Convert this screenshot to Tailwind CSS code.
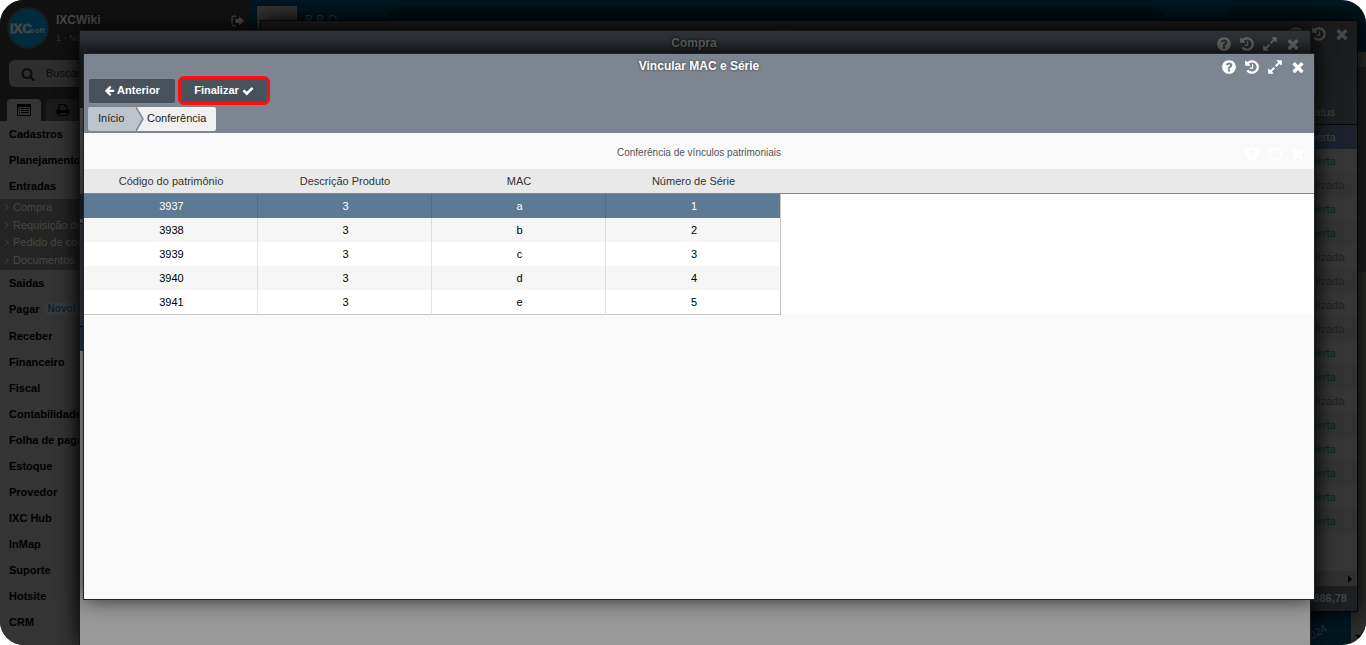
<!DOCTYPE html>
<html lang="pt-BR">
<head>
<meta charset="utf-8">
<title>Vincular MAC e Série</title>
<script src="https://cdn.jsdelivr.net/npm/@tailwindcss/browser@4"></script>
</head>
<body class="bg-white font-['Liberation_Sans',Arial,sans-serif] text-[11px]">

<svg class="hidden" aria-hidden="true">
  <symbol id="help" viewBox="0 0 1792 1792"><path d="M1024 1376v-192q0-14-9-23t-23-9h-192q-14 0-23 9t-9 23v192q0 14 9 23t23 9h192q14 0 23-9t9-23zm256-672q0-88-55.5-163t-138.5-116-170-41q-243 0-371 213-15 24 8 42l132 100q7 6 19 6 16 0 25-12 53-68 86-92 34-24 86-24 48 0 85.5 26t37.5 59q0 38-20 61t-68 45q-63 28-115.5 86.5t-52.5 125.5v36q0 14 9 23t23 9h192q14 0 23-9t9-23q0-19 21.5-49.5t54.5-49.5q32-18 49-28.5t46-35 44.5-48 28-60.5 12.5-81zm384 192q0 209-103 385.5t-279.5 279.5-385.5 103-385.5-103-279.5-279.5-103-385.5 103-385.5 279.5-279.5 385.5-103 385.5 103 279.5 279.5 103 385.5z"/></symbol>
  <symbol id="history" viewBox="0 0 1792 1792"><path d="M1664 896q0 156-61 298t-164 245-245 164-298 61q-172 0-327-72.5t-264-204.5q-7-10-6.5-22.5t8.5-20.5l137-138q10-9 25-9 16 2 23 12 73 95 179 147t225 52q104 0 198.5-40.5t163.5-109.5 109.5-163.5 40.5-198.5-40.5-198.5-109.5-163.5-163.5-109.5-198.5-40.5q-98 0-188 35.5t-160 101.5l137 138q31 30 14 69-17 40-59 40h-448q-26 0-45-19t-19-45v-448q0-42 40-59 39-17 69 14l130 129q107-101 244.5-156.5t284.5-55.5q156 0 298 61t245 164 164 245 61 298zm-640-288v448q0 14-9 23t-23 9h-320q-14 0-23-9t-9-23v-64q0-14 9-23t23-9h224v-352q0-14 9-23t23-9h64q14 0 23 9t9 23z"/></symbol>
  <symbol id="expand" viewBox="0 0 1792 1792"><path d="M883 1056q0 13-10 23l-332 332 144 144q19 19 19 45t-19 45-45 19h-448q-26 0-45-19t-19-45v-448q0-26 19-45t45-19 45 19l144 144 332-332q10-10 23-10t23 10l114 114q10 10 10 23zm781-864v448q0 26-19 45t-45 19-45-19l-144-144-332 332q-10 10-23 10t-23-10l-114-114q-10-10-10-23t10-23l332-332-144-144q-19-19-19-45t19-45 45-19h448q26 0 45 19t19 45z"/></symbol>
  <symbol id="close" viewBox="0 0 1792 1792"><path d="M1490 1322q0 40-28 68l-136 136q-28 28-68 28t-68-28l-294-294-294 294q-28 28-68 28t-68-28l-136-136q-28-28-28-68t28-68l294-294-294-294q-28-28-28-68t28-68l136-136q28-28 68-28t68 28l294 294 294-294q28-28 68-28t68 28l136 136q28 28 28 68t-28 68l-294 294 294 294q28 28 28 68z"/></symbol>
  <symbol id="check" viewBox="0 0 1792 1792"><path d="M1671 566q0 40-28 68l-724 724-136 136q-28 28-68 28t-68-28l-136-136-362-362q-28-28-28-68t28-68l136-136q28-28 68-28t68 28l294 295 656-657q28-28 68-28t68 28l136 136q28 28 28 68z"/></symbol>
  <symbol id="arrow" viewBox="0 0 1792 1792"><path d="M1664 896v128q0 53-32.5 90.5t-84.5 37.5h-704l293 294q38 36 38 90t-38 90l-75 76q-37 37-90 37-52 0-91-37l-651-652q-37-37-37-90 0-52 37-91l651-650q38-38 91-38 52 0 90 38l75 74q38 38 38 91t-38 91l-293 293h704q52 0 84.5 37.5t32.5 90.5z"/></symbol>
  <symbol id="search" viewBox="0 0 1792 1792"><path d="M1216 832q0-185-131.5-316.5t-316.5-131.5-316.5 131.5-131.5 316.5 131.5 316.5 316.5 131.5 316.5-131.5 131.5-316.5zm512 832q0 52-38 90t-90 38q-54 0-90-38l-343-342q-179 124-399 124-143 0-273.5-55.5t-225-150-150-225-55.5-273.5 55.5-273.5 150-225 225-150 273.5-55.5 273.5 55.5 225 150 150 225 55.5 273.5q0 220-124 399l343 343q37 37 37 90z"/></symbol>
  <symbol id="print" viewBox="0 0 1792 1792"><path d="M448 1536h896v-256h-896v256zm0-640h896v-384h-160q-40 0-68-28t-28-68v-160h-640v640zm1152 64q0-26-19-45t-45-19-45 19-19 45 19 45 45 19 45-19 19-45zm128 0v416q0 13-9.5 22.5t-22.5 9.5h-224v160q0 40-28 68t-68 28h-960q-40 0-68-28t-28-68v-160h-224q-13 0-22.5-9.5t-9.5-22.5v-416q0-79 56.5-135.5t135.5-56.5h64v-544q0-40 28-68t68-28h672q40 0 88 20t76 48l152 152q28 28 48 76t20 88v256h64q79 0 135.5 56.5t56.5 135.5z"/></symbol>
  <symbol id="list" viewBox="0 0 14 12"><path fill-rule="evenodd" d="M1.2 0h11.6Q14 0 14 1.2v9.6q0 1.200-1.200 1.200H1.200Q0 12 0 10.800V1.200Q0 0 1.200 0zM1 3v7.800q0 .2.2.2h11.600q.2 0 .2-.2V3zM2 4h1v1H2zM4 4h8v1H4zM2 6h1v1H2zM4 6h8v1H4zM2 8h1v1H2zM4 8h8v1H4z"/></symbol>
  <symbol id="exit" viewBox="0 0 14 12"><path fill="none" stroke="currentColor" stroke-width="1.200" d="M5 1.200H2.800Q1 1.200 1 3v6q0 1.800 1.800 1.800H5"/><path d="M4.500 4h3.500V1.200L13 6 8 10.800V8H4.500z"/></symbol>
</svg>

<div class="relative flex h-screen overflow-hidden rounded-3xl bg-[#001722]">

  <!-- Sidebar -->
  <aside class="flex w-[250px] shrink-0 flex-col bg-[#343434] text-black">
    <div class="bg-[#111111] px-[9px] pt-[7px]">
      <div class="flex h-[53px] items-start">
        <svg class="-ml-0.5 size-[42px] shrink-0" viewBox="0 0 42 42" role="img" aria-label="IXCsoft">
          <circle cx="21" cy="21" r="20" fill="#002b3d" stroke="#191d1f" stroke-width="1.500"/>
          <text x="3" y="26" fill="#444" stroke="#444" stroke-width=".8" font-family="Liberation Sans" font-weight="700" font-size="13">IXC</text>
          <text x="23" y="26" fill="#444" font-family="Liberation Sans" font-weight="700" font-size="8">soft</text>
        </svg>
        <div class="ml-[7px] flex-1 pt-[5px] text-[#484848]">
          <p class="text-xs leading-4 font-bold">IXCWiki</p>
          <p class="mt-1 text-[9px] leading-3 text-[#303030]">1 - Novo</p>
        </div>
        <button class="mt-2 -mr-1 text-[#484848]" aria-label="Sair"><svg class="h-3 w-[14px] fill-current"><use href="#exit"/></svg></button>
      </div>
      <label class="flex h-[27px] items-center gap-[11px] rounded-md bg-[#2e2e2e] px-3 text-[#0b0b0b]">
        <svg class="size-[14px] fill-current"><use href="#search"/></svg>
        <input class="min-w-0 flex-1 placeholder:text-[#0b0b0b]" placeholder="Buscar" aria-label="Buscar">
      </label>
      <div class="mt-3 -ml-0.5 flex gap-[5px]">
        <button class="flex h-[22px] w-[34px] items-center justify-center rounded-t bg-[#343434]" aria-label="Menu"><svg class="h-3 w-[14px] fill-current"><use href="#list"/></svg></button>
        <button class="flex h-[22px] w-[34px] items-center justify-center rounded-t bg-[#1b1b1b]" aria-label="Imprimir"><svg class="size-[14px] fill-current"><use href="#print"/></svg></button>
      </div>
    </div>
    <nav class="font-bold leading-[26px]">
      <a href="#" class="block pl-[9px]">Cadastros</a>
      <a href="#" class="block pl-[9px]">Planejamento</a>
      <a href="#" class="block pl-[9px]">Entradas</a>
      <div class="flex h-[71px] flex-col justify-between bg-[#242424] pb-px font-normal leading-[17px] text-[#474747]">
        <a href="#" class="flex items-center gap-1 pl-1"><svg class="h-[7px] w-[5px] fill-none stroke-current" viewBox="0 0 5 7"><path d="M1 .5l3 3-3 3"/></svg>Compra</a>
        <a href="#" class="flex items-center gap-1 pl-1"><svg class="h-[7px] w-[5px] fill-none stroke-current" viewBox="0 0 5 7"><path d="M1 .5l3 3-3 3"/></svg>Requisição de</a>
        <a href="#" class="flex items-center gap-1 pl-1"><svg class="h-[7px] w-[5px] fill-none stroke-current" viewBox="0 0 5 7"><path d="M1 .5l3 3-3 3"/></svg>Pedido de compra</a>
        <a href="#" class="flex items-center gap-1 pl-1"><svg class="h-[7px] w-[5px] fill-none stroke-current" viewBox="0 0 5 7"><path d="M1 .5l3 3-3 3"/></svg>Documentos</a>
      </div>
      <a href="#" class="block pl-[9px]">Saidas</a>
      <a href="#" class="mb-px flex items-center pl-[9px]">Pagar <span class="ml-1 rounded-full bg-[#363a3c] px-1 text-[10px] leading-3 text-[#0c2430]">Novo!</span></a>
      <a href="#" class="block pl-[9px]">Receber</a>
      <a href="#" class="block pl-[9px]">Financeiro</a>
      <a href="#" class="block pl-[9px]">Fiscal</a>
      <a href="#" class="block pl-[9px]">Contabilidade</a>
      <a href="#" class="block pl-[9px]">Folha de pagamento</a>
      <a href="#" class="block pl-[9px]">Estoque</a>
      <a href="#" class="block pl-[9px]">Provedor</a>
      <a href="#" class="block pl-[9px]">IXC Hub</a>
      <a href="#" class="block pl-[9px]">InMap</a>
      <a href="#" class="block pl-[9px]">Suporte</a>
      <a href="#" class="block pl-[9px]">Hotsite</a>
      <a href="#" class="block pl-[9px]">CRM</a>
    </nav>
  </aside>

  <!-- Desktop behind the windows -->
  <main class="flex min-w-0 flex-1 flex-col">
    <div class="flex h-[52px] items-start gap-2 pt-1.5 pl-[7px]">
      <div class="h-10 w-10 bg-[#353535]"></div>
      <p class="pt-1.5 text-xs leading-4 text-[#3a3a3a]">B B O —</p>
      <div class="ml-6 h-11 flex-1 rounded-3xl bg-[#001118]"></div>
      <div class="ml-12 h-11 w-[141px] rounded-l-lg bg-[#00131b]"></div>
    </div>
    <div class="flex flex-1 items-stretch justify-end">
      <p class="mr-6 mb-1.5 -rotate-[30deg] self-end text-[11px] leading-3 text-[#263a44]">2024</p>
      <div class="flex w-[15px] flex-col items-center justify-between bg-[#2c2c2b] pb-1.5">
        <div class="mt-[15px] h-[205px] w-full bg-[#1f1f1f]"></div>
        <svg class="h-1 w-2" viewBox="0 0 8 4"><path d="M0 0h8L4 4z"/></svg>
      </div>
    </div>
  </main>

  <!-- Window: purchases list -->
  <section class="absolute top-5 right-2 bottom-[33px] left-[260px] flex flex-col border border-[#050505] bg-[#363636] shadow-[0_0_20px_#000]">
    <header class="flex h-[79px] items-start bg-linear-to-b from-[#1a1a1b] to-[#1c2023] pr-[7px]">
      <h2 class="flex-1 pl-[55px] text-center text-xs leading-[26px] font-bold text-[#333]">Compra</h2>
      <div class="flex h-[26px] items-center gap-[7px] text-[#474747]">
        <svg class="size-4 fill-current"><use href="#help"/></svg>
        <svg class="size-4 fill-current"><use href="#history"/></svg>
        <svg class="size-4 fill-current"><use href="#close"/></svg>
      </div>
    </header>
    <table class="w-full table-fixed border-separate border-spacing-0 text-center text-[#202020]">
      <thead><tr class="h-[25px] bg-[#1c2023] text-[#444] [&>*]:border-b [&>*]:border-[#080a0b]"><td></td><th class="w-[75px] font-normal">Status</th></tr></thead>
      <tbody class="[&>tr]:h-6 [&>tr:nth-child(odd)]:bg-[#333333]">
        <tr class="bg-[#1b222d]! text-[#464646]"><td></td><td>Aberta</td></tr>
        <tr class="text-[#0a2515]"><td></td><td>Aberta</td></tr>
        <tr><td></td><td>Finalizada</td></tr>
        <tr class="text-[#0a2515]"><td></td><td>Aberta</td></tr>
        <tr class="text-[#0a2515]"><td></td><td>Aberta</td></tr>
        <tr><td></td><td>Finalizada</td></tr>
        <tr><td></td><td>Finalizada</td></tr>
        <tr><td></td><td>Finalizada</td></tr>
        <tr><td></td><td>Finalizada</td></tr>
        <tr class="text-[#0a2515]"><td></td><td>Aberta</td></tr>
        <tr class="text-[#0a2515]"><td></td><td>Aberta</td></tr>
        <tr><td></td><td>Finalizada</td></tr>
        <tr class="text-[#0a2515]"><td></td><td>Aberta</td></tr>
        <tr class="text-[#0a2515]"><td></td><td>Aberta</td></tr>
        <tr class="text-[#0a2515]"><td></td><td>Aberta</td></tr>
        <tr class="text-[#0a2515]"><td></td><td>Aberta</td></tr>
        <tr class="text-[#0a2515]"><td></td><td>Aberta</td></tr>
      </tbody>
    </table>
    <div class="flex-1"></div>
    <div class="flex h-[15px] items-center justify-end bg-[#303030] pr-[5px]"><svg class="h-2 w-1" viewBox="0 0 4 8"><path d="M0 0v8l4-4z"/></svg></div>
    <footer class="bg-[#1c2023] pr-2.5 pb-px text-right leading-6 font-bold text-[#444]">2.886,78</footer>
  </section>

  <!-- Window: purchase -->
  <section class="absolute top-[30px] right-[55px] bottom-0 left-[79px] flex flex-col border-x border-[#181818] bg-[#999999] shadow-[0_0_20px_#000]">
    <header class="flex h-[78px] shrink-0 items-start border-t border-[#181818] bg-linear-to-b from-[#2e3136] from-10% to-[#1b1f21] to-30% pr-[9px]">
      <h2 class="flex-1 pl-[92px] text-center text-xs leading-6 font-bold text-[#626262] [text-shadow:0_0_3px_#000]">Compra</h2>
      <div class="flex h-[26px] items-center gap-[7px] text-[#646464]">
        <svg class="size-4 fill-current"><use href="#help"/></svg>
        <svg class="size-4 fill-current"><use href="#history"/></svg>
        <svg class="size-4 fill-current"><use href="#expand"/></svg>
        <svg class="size-4 fill-current"><use href="#close"/></svg>
      </div>
    </header>
    <div class="h-[86px] shrink-0 bg-linear-to-b from-[#5a5a5a] to-[#4a4a4a]"></div>
    <div class="h-[25px] shrink-0 bg-[#1b2532]"></div>
    <div class="h-[5px] shrink-0 border-b border-[#111] bg-[#5a5a5a]"></div>
    <div class="h-[102px] shrink-0 bg-[#343a41]"></div>
    <div class="h-[25px] shrink-0 border-t border-[#111] bg-[#263849]"></div>
  </section>

  <!-- Window: link MAC and serial -->
  <section class="absolute top-[53px] right-[51px] bottom-[45px] left-[83px] flex flex-col border border-[#202326] bg-[#f9f9f9] shadow-[0_0_20px_#000000b0]">
    <header class="bg-[#7d8690] pb-0.5">
      <div class="flex items-start pr-2">
        <h1 class="flex-1 pl-[93px] text-center text-xs leading-6 font-bold text-white [text-shadow:0_0_3px_#333]">Vincular MAC e Série</h1>
        <div class="flex h-[26px] items-center gap-[7px] text-white">
          <button aria-label="Ajuda"><svg class="size-4 fill-current"><use href="#help"/></svg></button>
          <button aria-label="Histórico"><svg class="size-4 fill-current"><use href="#history"/></svg></button>
          <button aria-label="Expandir"><svg class="size-4 fill-current"><use href="#expand"/></svg></button>
          <button aria-label="Fechar"><svg class="size-4 fill-current"><use href="#close"/></svg></button>
        </div>
      </div>
      <div class="-mt-1 flex items-center gap-[3px] pl-[5px] font-bold text-white">
        <button class="flex h-6 w-[86px] items-center justify-center gap-0.5 rounded-xs bg-[#48525d]"><svg class="size-[11px] fill-current"><use href="#arrow"/></svg>Anterior</button>
        <button class="flex h-[29px] w-[92px] items-center justify-center gap-[3px] rounded-md border-3 border-[#fe0e12] bg-[#48525d]">Finalizar<svg class="size-3 fill-current"><use href="#check"/></svg></button>
      </div>
      <nav class="mt-0.5 flex h-6 items-center pl-1 leading-[22px] text-[#222]">
        <a href="#" class="h-6 w-[48px] rounded-l-xs bg-[#bec4cc] pl-2.5">Início</a>
        <svg class="h-6 w-2" viewBox="0 0 8 24"><path fill="#f0f0f0" d="M0 0h8v24H0z"/><path fill="#bec4cc" d="M0 0l7 12-7 12z"/><path fill="none" stroke="#7d8690" stroke-width="1.500" d="M0 0l7 12-7 12"/></svg>
        <a href="#" class="h-6 rounded-r-xs bg-[#f0f0f0] pr-2.5 pl-[3px]">Conferência</a>
      </nav>
    </header>

    <div class="flex h-9 items-center pr-2">
      <h2 class="flex-1 pt-0.5 pl-[70px] text-center text-[10px] text-[#555]">Conferência de vínculos patrimoniais</h2>
      <div class="flex gap-[7px] pt-1.5 text-white">
        <svg class="size-4 fill-current"><use href="#help"/></svg>
        <svg class="size-4 fill-current"><use href="#history"/></svg>
        <svg class="size-4 fill-current"><use href="#close"/></svg>
      </div>
    </div>

    <div class="bg-[linear-gradient(#e9e9e9_24px,#7d8690_24px,#7d8690_25px,white_25px)]">
      <table class="w-[697px] table-fixed border-separate border-spacing-0 text-center">
        <colgroup><col class="w-[174px]"><col class="w-[174px]"><col class="w-[174px]"><col></colgroup>
        <thead>
          <tr class="h-[25px] text-[#333] [&>th]:border-b [&>th]:border-[#7d8690] [&>th]:font-normal"><th>Código do patrimônio</th><th>Descrição Produto</th><th>MAC</th><th>Número de Série</th></tr>
        </thead>
        <tbody class="text-black [&>tr]:h-6 [&>tr:nth-child(even)]:bg-[#f6f6f6] [&_td]:border-r [&_td]:border-black/10 [&_td]:pl-0.5 [&_td:last-child]:border-[#c8c8c8] [&>tr:last-child>td]:border-b [&>tr:last-child>td]:border-b-[#c8c8c8]">
          <tr class="bg-[#5d7a95] text-white"><td>3937</td><td>3</td><td>a</td><td>1</td></tr>
          <tr><td>3938</td><td>3</td><td>b</td><td>2</td></tr>
          <tr><td>3939</td><td>3</td><td>c</td><td>3</td></tr>
          <tr><td>3940</td><td>3</td><td>d</td><td>4</td></tr>
          <tr class="h-[25px]!"><td>3941</td><td>3</td><td>e</td><td>5</td></tr>
        </tbody>
      </table>
    </div>
  </section>
</div>
</body>
</html>
